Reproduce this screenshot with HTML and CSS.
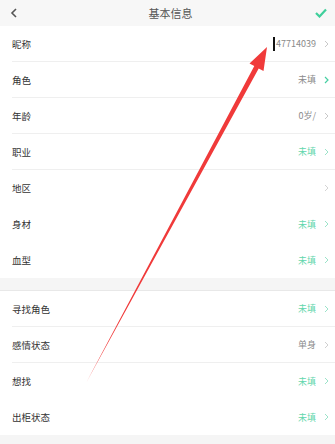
FILE: index.html
```html
<!DOCTYPE html>
<html lang="zh-CN">
<head>
    <meta charset="UTF-8">
    <meta name="viewport" content="width=device-width, initial-scale=1.0">
    <title>基本信息</title>
    <link rel="stylesheet" href="styles.css">
</head>
<body>
    <div class="header">
        <svg class="back" width="8" height="10" viewBox="0 0 8 10"><polyline points="6,1 2,5 6,9" fill="none" stroke="#555" stroke-width="1.6"/></svg>
        <span class="title">基本信息</span>
        <svg class="done" width="12" height="10" viewBox="0 0 12 10"><polyline points="1,5 4.5,8.5 11,1.5" fill="none" stroke="#3fcf9b" stroke-width="2.2"/></svg>
    </div>

    <div class="group">
        <div class="row">
            <span class="label">昵称</span>
            <span class="value gray"><span class="cursor"></span>47714039</span>
            <svg class="chev" width="5" height="8" viewBox="0 0 5 8"><polyline points="1,1 4,4 1,7" fill="none" stroke="#c8c8c8" stroke-width="1"/></svg>
        </div>
        <div class="row">
            <span class="label">角色</span>
            <span class="value gray">未填</span>
            <svg class="chev" width="5" height="8" viewBox="0 0 5 8"><polyline points="1,1 4,4 1,7" fill="none" stroke="#46cfa2" stroke-width="1.2"/></svg>
        </div>
        <div class="row">
            <span class="label">年龄</span>
            <span class="value gray">0岁/</span>
            <svg class="chev" width="5" height="8" viewBox="0 0 5 8"><polyline points="1,1 4,4 1,7" fill="none" stroke="#c8c8c8" stroke-width="1"/></svg>
        </div>
        <div class="row">
            <span class="label">职业</span>
            <span class="value green">未填</span>
            <svg class="chev" width="5" height="8" viewBox="0 0 5 8"><polyline points="1,1 4,4 1,7" fill="none" stroke="#9be3c9" stroke-width="1"/></svg>
        </div>
        <div class="row no-line">
            <span class="label">地区</span>
            <span class="value"></span>
            <svg class="chev" width="5" height="8" viewBox="0 0 5 8"><polyline points="1,1 4,4 1,7" fill="none" stroke="#d4d4d4" stroke-width="1"/></svg>
        </div>
        <div class="row no-line">
            <span class="label">身材</span>
            <span class="value green">未填</span>
            <svg class="chev" width="5" height="8" viewBox="0 0 5 8"><polyline points="1,1 4,4 1,7" fill="none" stroke="#9be3c9" stroke-width="1"/></svg>
        </div>
        <div class="row no-line">
            <span class="label">血型</span>
            <span class="value green">未填</span>
            <svg class="chev" width="5" height="8" viewBox="0 0 5 8"><polyline points="1,1 4,4 1,7" fill="none" stroke="#9be3c9" stroke-width="1"/></svg>
        </div>
    </div>

    <div class="group second">
        <div class="row">
            <span class="label">寻找角色</span>
            <span class="value green">未填</span>
            <svg class="chev" width="5" height="8" viewBox="0 0 5 8"><polyline points="1,1 4,4 1,7" fill="none" stroke="#9be3c9" stroke-width="1"/></svg>
        </div>
        <div class="row">
            <span class="label">感情状态</span>
            <span class="value gray">单身</span>
            <svg class="chev" width="5" height="8" viewBox="0 0 5 8"><polyline points="1,1 4,4 1,7" fill="none" stroke="#d0d0d0" stroke-width="1"/></svg>
        </div>
        <div class="row no-line">
            <span class="label">想找</span>
            <span class="value green">未填</span>
            <svg class="chev" width="5" height="8" viewBox="0 0 5 8"><polyline points="1,1 4,4 1,7" fill="none" stroke="#9be3c9" stroke-width="1"/></svg>
        </div>
        <div class="row no-line">
            <span class="label">出柜状态</span>
            <span class="value green">未填</span>
            <svg class="chev" width="5" height="8" viewBox="0 0 5 8"><polyline points="1,1 4,4 1,7" fill="none" stroke="#9be3c9" stroke-width="1"/></svg>
        </div>
    </div>

    <!-- annotation arrow drawn over the screen -->
    <svg class="arrow" width="335" height="444" viewBox="0 0 335 444">
        <polygon points="86,383 254.3,66.1 249.5,63.5 267,47 263.5,71.1 258.7,68.5" fill="#f03a3a"/>
    </svg>
</body>
</html>
```

FILE: styles.css
```css
body {
    margin: 0;
    background-color: #f5f5f5;
    font-family: "Noto Sans CJK SC", "Noto Sans", sans-serif;
    color: #333;
    width: 335px;
    height: 444px;
    overflow: hidden;
    position: relative;
}
.header {
    height: 26px;
    display: flex;
    align-items: center;
    justify-content: space-between;
    padding: 0 8px 0 10px;
    background-color: #f7f7f7;
}
.title {
    font-size: 11px;
    color: #555;
    margin-left: 8px;
}
.group {
    background-color: white;
}
.group.second {
    margin-top: 12px;
    border-top: 1px solid #e8e8e8;
}
.row {
    height: 36px;
    margin-left: 12px;
    padding-right: 6px;
    display: flex;
    align-items: center;
    border-bottom: 1px solid #efefef;
    box-sizing: border-box;
}
.row.no-line {
    border-bottom: none;
}
.label {
    flex: 1;
    font-size: 9.5px;
    color: #333;
}
.value {
    font-size: 9px;
    margin-right: 8px;
    display: flex;
    align-items: center;
}
.gray {
    color: #8a8a8a;
}
.green {
    color: #5fd6ac;
}
.cursor {
    display: inline-block;
    width: 2px;
    height: 14px;
    background-color: #111;
    margin-right: 1px;
}
.chev {
    display: block;
}
.arrow {
    position: absolute;
    left: 0;
    top: 0;
    pointer-events: none;
}
```
